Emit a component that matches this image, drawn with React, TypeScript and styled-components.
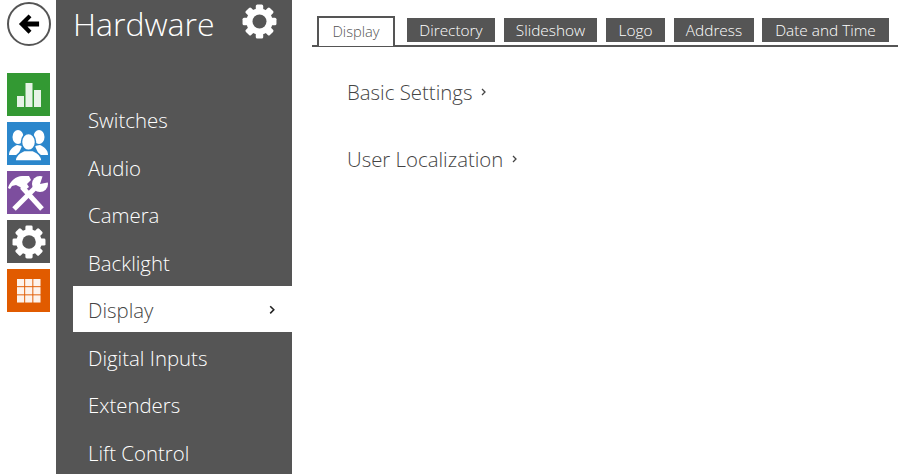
import React from "react";
import styled, { createGlobalStyle } from "styled-components";

const Global = createGlobalStyle`
  html, body { margin: 0; padding: 0; background: #fff; }
  body { font-family: "Open Sans", "Noto Sans", "Liberation Sans", sans-serif; overflow: hidden; }
`;

const Page = styled.div`
  display: flex;
  width: 898px;
  height: 474px;
  overflow: hidden;
`;

const Rail = styled.nav`
  width: 56px;
  flex: none;
  display: flex;
  flex-direction: column;
  align-items: flex-start;
  padding: 2px 0 0 7px;
  box-sizing: border-box;
`;

const BackButton = styled.div`
  width: 44px;
  height: 44px;
  box-sizing: border-box;
  margin: 0 0 27px 0;
  border: 2px solid #555;
  border-radius: 50%;
  display: flex;
  align-items: center;
  justify-content: center;
`;

const RailIcons = styled.div`
  display: flex;
  flex-direction: column;
  gap: 6px;
`;

const RailTile = styled.div<{ $bg: string }>`
  width: 43px;
  height: 43px;
  background: ${(p) => p.$bg};
  display: flex;
  align-items: center;
  justify-content: center;
`;

const Sidebar = styled.aside`
  width: 236px;
  flex: none;
  background: #555;
  display: flex;
  flex-direction: column;
  padding-left: 17px;
  box-sizing: border-box;
`;

const SideHeader = styled.header`
  flex: none;
  height: 96px;
  display: flex;
  align-items: flex-start;
  justify-content: space-between;
  padding: 2px 15px 0 0;
  box-sizing: border-box;
`;

const GearSlot = styled.div`
  margin-top: 2px;
`;

const Title = styled.h1`
  margin: 0;
  font-size: 32px;
  line-height: 43px;
  font-weight: 300;
  color: #fff;
`;

const MenuList = styled.ul`
  list-style: none;
  margin: 0;
  padding: 0;
  flex: none;
`;

const MenuItem = styled.li<{ $active?: boolean }>`
  height: 46px;
  box-sizing: border-box;
  margin-bottom: 1.5px;
  padding: 2px 17px 0 15px;
  display: flex;
  align-items: center;
  justify-content: space-between;
  font-size: 20.4px;
  font-weight: 300;
  color: ${(p) => (p.$active ? "#444" : "#fff")};
  background: ${(p) => (p.$active ? "#fff" : "transparent")};
`;

const Main = styled.main`
  flex: 1;
  padding: 16px 0 0 20px;
  min-width: 0;
`;

const TabBar = styled.div`
  display: flex;
  align-items: flex-start;
  height: 29px;
  border-bottom: 2px solid #555;
  padding-left: 5px;
`;

const ActiveTab = styled.div`
  width: 78px;
  height: 30px;
  box-sizing: border-box;
  border: 2px solid #555;
  border-bottom: none;
  padding-bottom: 3px;
  background: #fff;
  color: #555;
  font-size: 14.7px;
  font-weight: 300;
  display: flex;
  align-items: center;
  justify-content: center;
  margin-right: 12px;
`;

const Tab = styled.div<{ $w: number; $gap: number }>`
  width: ${(p) => p.$w}px;
  height: 24px;
  margin-top: 2px;
  margin-right: ${(p) => p.$gap}px;
  background: #555;
  color: #fff;
  font-size: 15.4px;
  font-weight: 300;
  display: flex;
  align-items: center;
  justify-content: center;
`;

const Sections = styled.div`
  padding: 29px 0 0 35px;
  display: flex;
  flex-direction: column;
  gap: 36px;
`;

const SectionLink = styled.div`
  height: 31px;
  display: flex;
  align-items: center;
  gap: 9px;
  font-size: 20.4px;
  font-weight: 300;
  color: #444;
`;

const Gear = ({ size, hole }: { size: number; hole: string }) => {
  const teeth = Array.from({ length: 8 }, (_, i) => i * 45);
  return (
    <svg width={size} height={size} viewBox="0 0 32 32">
      {teeth.map((a) => (
        <rect key={a} x="12.6" y="0.5" width="6.8" height="8" rx="1.4" fill="#fff" transform={`rotate(${a} 16 16)`} />
      ))}
      <circle cx="16" cy="16" r="12" fill="#fff" />
      <circle cx="16" cy="16" r="6.4" fill={hole} />
    </svg>
  );
};

const Chevron = ({ size, color }: { size: number; color: string }) => (
  <svg width={size} height={size * 1.6} viewBox="0 0 5 8" fill="none" stroke={color} strokeWidth="1.3">
    <path d="M1 1l3 3-3 3" />
  </svg>
);

const tabs: [string, number, number][] = [
  ["Directory", 88, 9],
  ["Slideshow", 93, 9],
  ["Logo", 59, 9],
  ["Address", 80, 8],
  ["Date and Time", 127, 0],
];

const items = ["Switches", "Audio", "Camera", "Backlight", "Display", "Digital Inputs", "Extenders", "Lift Control"];

export default function App() {
  return (
    <Page>
      <Global />
      <Rail>
        <BackButton>
          <svg width="22" height="22" viewBox="0 0 24 24">
            <path d="M1 12L11.5 1.5l3.2 3.2-4.4 4.6H23v5.400H10.300l4.400 4.600-3.200 3.200z" fill="#000" />
          </svg>
        </BackButton>
        <RailIcons>
          <RailTile $bg="#339933">
            <svg width="24" height="24" viewBox="0 0 24 24" fill="#fff" fillOpacity="0.88">
              <rect x="0" y="13" width="7" height="11" />
              <rect x="8.5" y="0" width="7" height="24" />
              <rect x="17" y="7" width="7" height="17" />
            </svg>
          </RailTile>
          <RailTile $bg="#2b87cc">
            <svg width="43" height="43" viewBox="0 0 43 43" fill="#fff">
              <ellipse cx="11" cy="15" rx="5.5" ry="7" />
              <ellipse cx="32" cy="15" rx="5.5" ry="7" />
              <path d="M2 33c0-5 3.500-8 8-10l5 1-4 9z" />
              <path d="M41 33c0-5-3.500-8-8-10l-5 1 4 9z" />
              <ellipse cx="21.5" cy="20" rx="7" ry="8.5" stroke="#2b87cc" strokeWidth="1.5" />
              <path d="M8 39c0-5 3-8 9-10.500h9c6 2.500 9 5.500 9 10.500z" stroke="#2b87cc" strokeWidth="1.5" />
            </svg>
          </RailTile>
          <RailTile $bg="#7d4e9e">
            <svg width="43" height="43" viewBox="0 0 43 43">
              <path d="M1 17C3 10 9 5 15 5h7l2 4-4 4 2 3-5 4-4-4-4-2-4 1-2 3z" fill="#fff" />
              <path d="M15 16l20 22" stroke="#fff" strokeWidth="5" fill="none" />
              <path d="M7 38l21-21" stroke="#fff" strokeWidth="5" fill="none" />
              <circle cx="33" cy="13" r="8" fill="#fff" />
              <path d="M33 13l3-9h7v7z" fill="#7d4e9e" />
            </svg>
          </RailTile>
          <RailTile $bg="#555555">
            <Gear size={34} hole="#555" />
          </RailTile>
          <RailTile $bg="#e15b00">
            <svg width="24" height="24" viewBox="0 0 25 25" fill="#fff" fillOpacity="0.92">
              {[0, 8.5, 17].flatMap((y) =>
                [0, 8.5, 17].map((x) => <rect key={`${x}-${y}`} x={x} y={y} width="7.5" height="7.5" />)
              )}
            </svg>
          </RailTile>
        </RailIcons>
      </Rail>
      <Sidebar>
        <SideHeader>
          <Title>Hardware</Title>
          <GearSlot>
            <Gear size={35} hole="#555" />
          </GearSlot>
        </SideHeader>
        <MenuList>
          {items.map((t) => (
            <MenuItem key={t} $active={t === "Display"}>
              {t}
              {t === "Display" && <Chevron size={6} color="#222" />}
            </MenuItem>
          ))}
        </MenuList>
      </Sidebar>
      <Main>
        <TabBar>
          <ActiveTab>Display</ActiveTab>
          {tabs.map(([t, w, g]) => (
            <Tab key={t} $w={w} $gap={g}>
              {t}
            </Tab>
          ))}
        </TabBar>
        <Sections>
          <SectionLink>
            Basic Settings <Chevron size={5} color="#444" />
          </SectionLink>
          <SectionLink>
            User Localization <Chevron size={5} color="#444" />
          </SectionLink>
        </Sections>
      </Main>
    </Page>
  );
}
